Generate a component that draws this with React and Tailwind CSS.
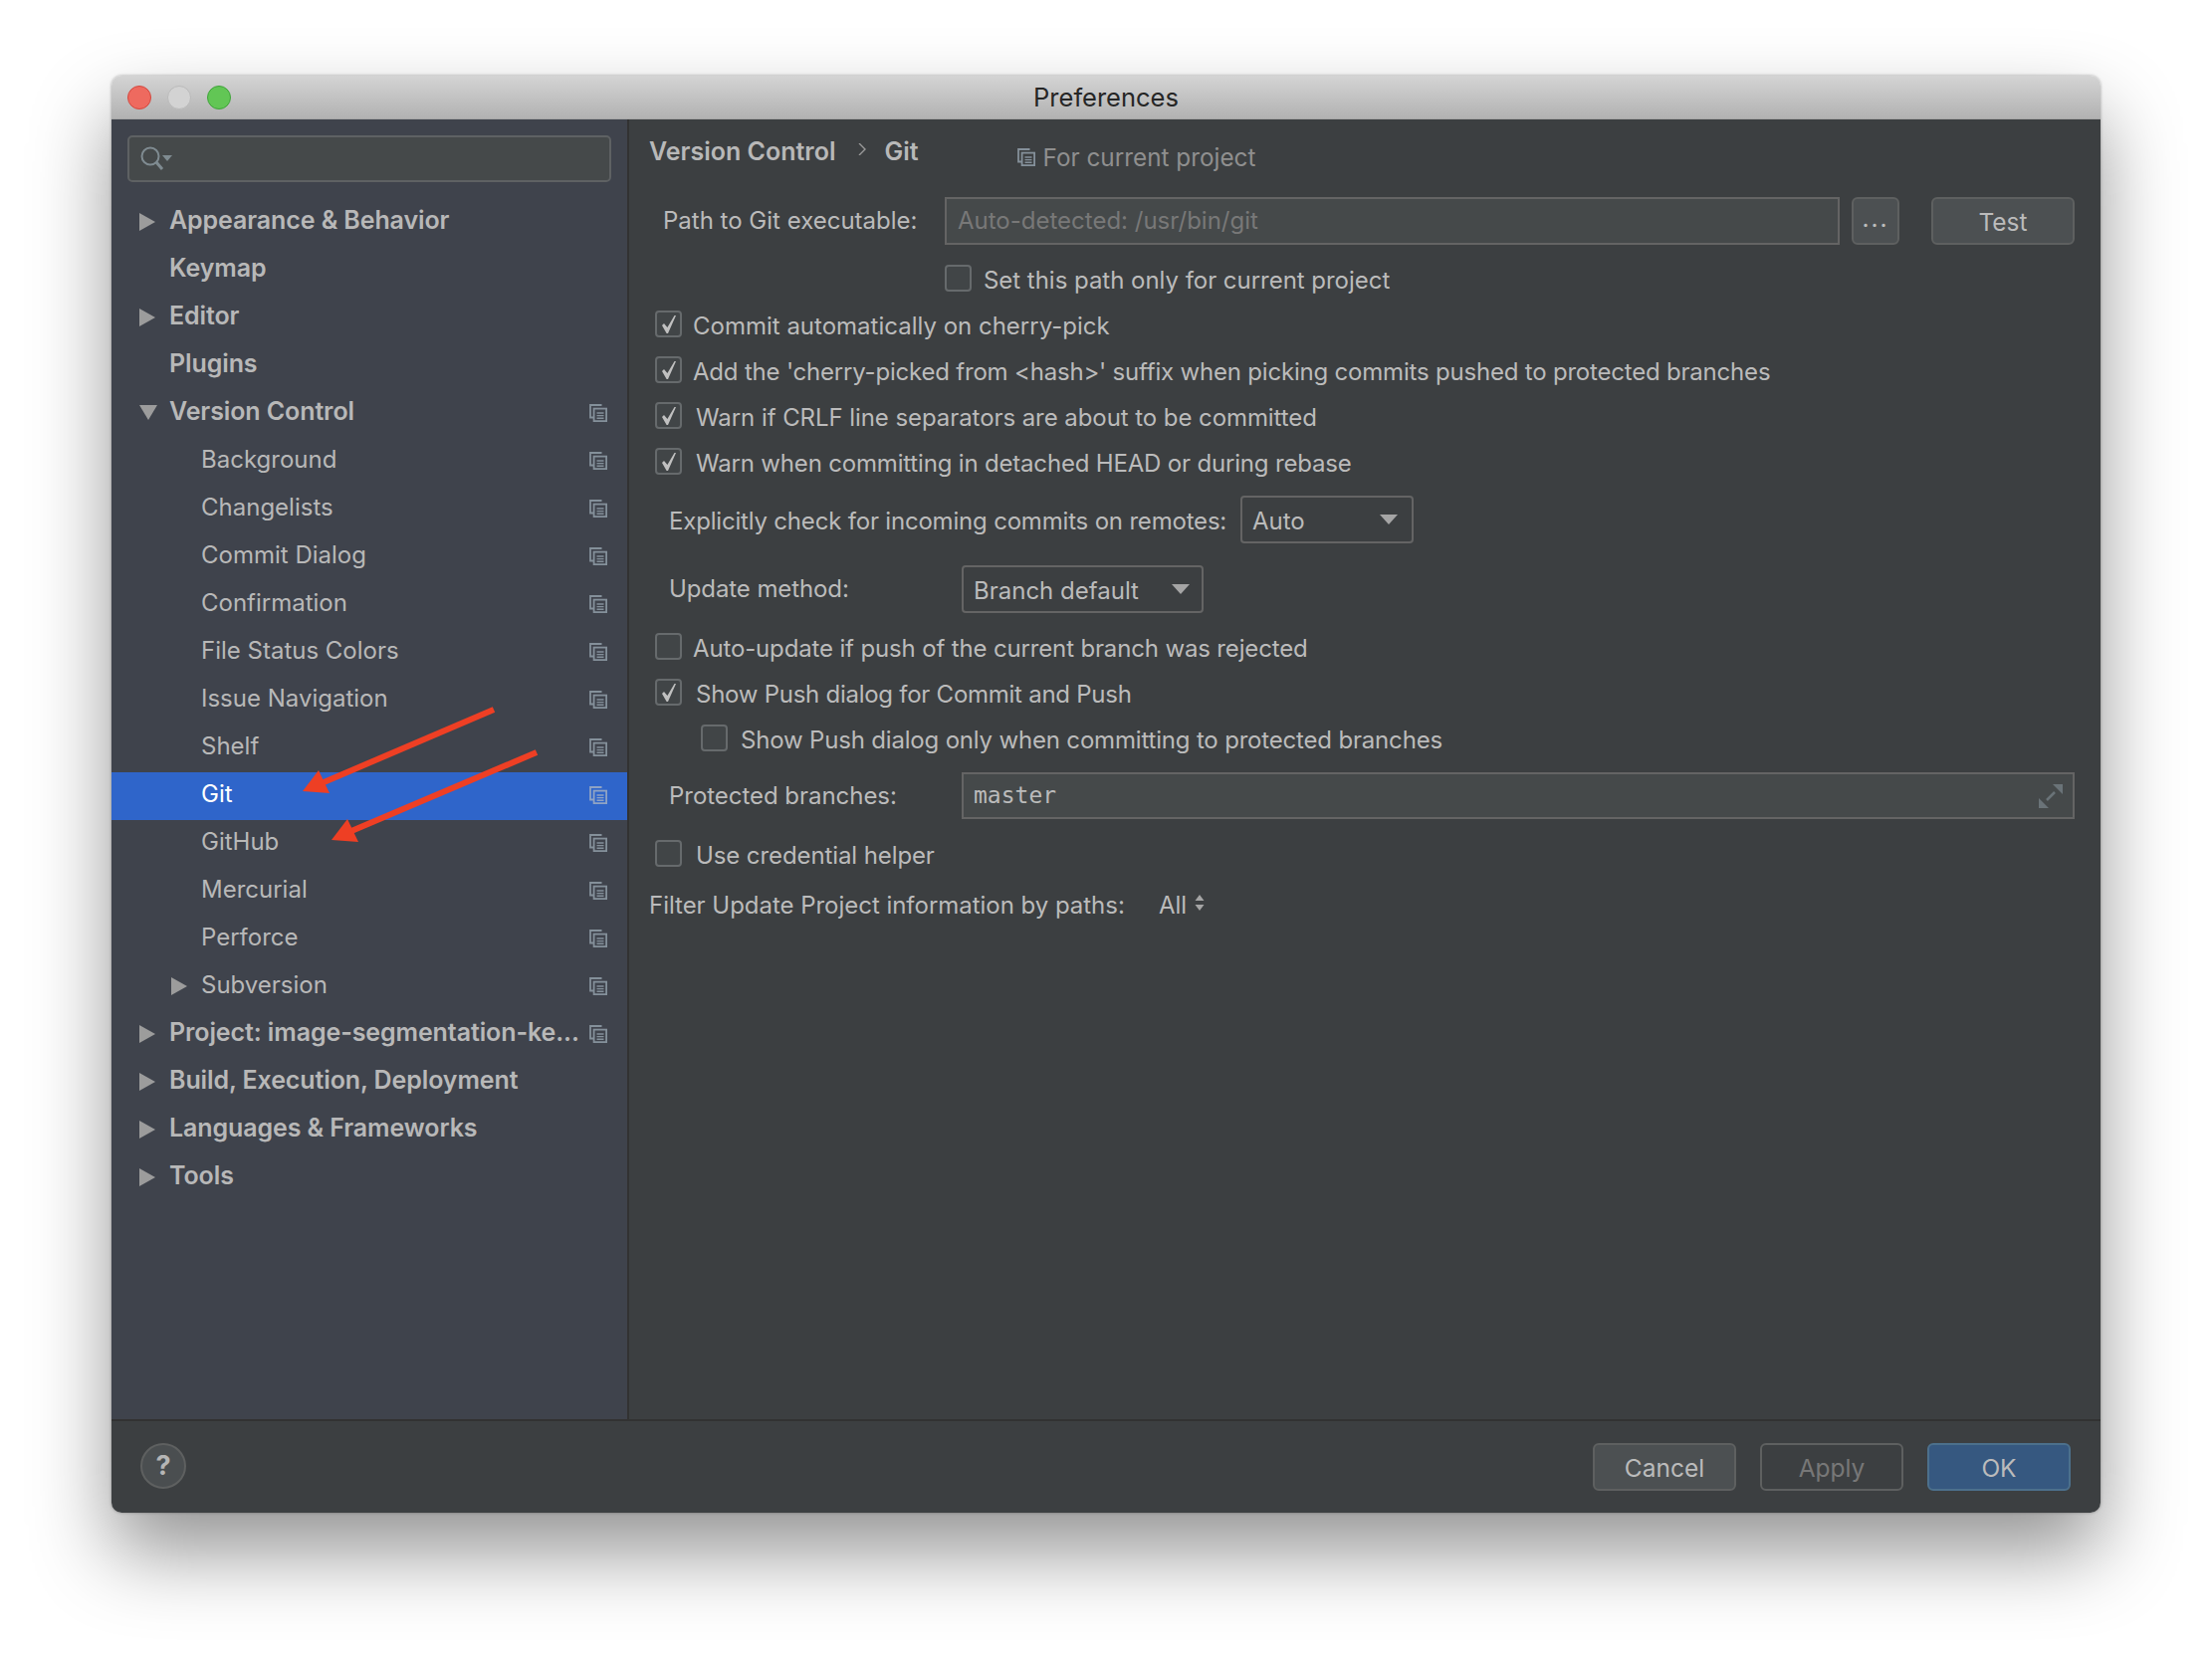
import React from 'react';

const treeItems = [
  { label: 'Appearance & Behavior', bold: true, arrow: 'right' },
  { label: 'Keymap', bold: true },
  { label: 'Editor', bold: true, arrow: 'right' },
  { label: 'Plugins', bold: true },
  { label: 'Version Control', bold: true, arrow: 'down', copy: true },
  { label: 'Background', level: 1, copy: true },
  { label: 'Changelists', level: 1, copy: true },
  { label: 'Commit Dialog', level: 1, copy: true },
  { label: 'Confirmation', level: 1, copy: true },
  { label: 'File Status Colors', level: 1, copy: true },
  { label: 'Issue Navigation', level: 1, copy: true },
  { label: 'Shelf', level: 1, copy: true },
  { label: 'Git', level: 1, copy: true, selected: true },
  { label: 'GitHub', level: 1, copy: true },
  { label: 'Mercurial', level: 1, copy: true },
  { label: 'Perforce', level: 1, copy: true },
  { label: 'Subversion', level: 1, arrow: 'right', copy: true },
  { label: 'Project: image-segmentation-ke...', bold: true, arrow: 'right', copy: true },
  { label: 'Build, Execution, Deployment', bold: true, arrow: 'right' },
  { label: 'Languages & Frameworks', bold: true, arrow: 'right' },
  { label: 'Tools', bold: true, arrow: 'right' },
];

function CopyIcon({ className = 'w-[18px] h-[18px] text-[#84909a]' }) {
  return (
    <svg viewBox="0 0 18 18" className={`shrink-0 ${className}`} fill="none" stroke="currentColor" strokeWidth="1.8">
      <path d="M12.5 1H1v12.5h3" />
      <rect x="4.6" y="4.6" width="12.5" height="12.5" />
      <path d="M7.5 9h7M7.5 11.6h7M7.5 14.2h7" strokeWidth="1.4" />
    </svg>
  );
}

function TreeRow({ item }) {
  const indent = item.level ? 'pl-[60px]' : 'pl-[28px]';
  return (
    <div className={`flex items-center h-12 pr-[20px] ${indent} ${item.selected ? 'bg-[#2f65ca]' : ''}`}>
      <div className="w-[30px] shrink-0 mb-[3px]">
        {item.arrow === 'right' && (
          <svg viewBox="0 0 16 18" className="w-4 h-[18px] text-[#9c9c9c]" fill="currentColor">
            <path d="M0 0l16 9L0 18z" />
          </svg>
        )}
        {item.arrow === 'down' && (
          <svg viewBox="0 0 18 15" className="w-[18px] h-[15px] text-[#9c9c9c]" fill="currentColor">
            <path d="M0 0h18L9 15z" />
          </svg>
        )}
      </div>
      <span
        className={`flex-1 whitespace-nowrap pb-[4px] ${
          item.bold ? 'text-[25px] tracking-[-0.1px] font-semibold' : 'text-[24px]'
        } ${item.selected ? 'text-white' : 'text-[#b8b8b8]'}`}
      >
        {item.label}
      </span>
      {item.copy && <CopyIcon className={`w-[18px] h-[18px] mb-[3px] ${item.selected ? 'text-[#8fa3c4]' : 'text-[#84909a]'}`} />}
    </div>
  );
}

function Checkbox({ checked }) {
  return (
    <div className="w-[27px] h-[27px] shrink-0 rounded-[4px] border-2 border-[#666a6c] bg-[#414547] flex items-center justify-center">
      {checked && (
        <svg viewBox="0 0 18 20" className="w-[18px] h-[20px] text-[#c0c0c0]" fill="currentColor">
          <path d="M2 11l2-2 3.4 4L14.5 1H16L8 19H6.6z" />
        </svg>
      )}
    </div>
  );
}

function CheckRow({ checked, label, className = '', labelGap = 'ml-[11px]', tracking = 'tracking-[-0.1px]' }) {
  return (
    <div className={`flex items-center h-[27px] ${className}`}>
      <Checkbox checked={checked} />
      <span className={`${labelGap} ${tracking} pt-[4px] text-[24px] text-[#bbbbbb] whitespace-nowrap`}>{label}</span>
    </div>
  );
}

function Combo({ value, className }) {
  return (
    <div className={`flex items-center justify-between h-full pl-[10px] rounded-[4px] border-2 border-[#646464] bg-[#3c3f41] ${className}`}>
      <span className="pt-[4px] text-[24px] text-[#bbbbbb]">{value}</span>
      <svg viewBox="0 0 18 10" className="w-[18px] h-[10px] text-[#a5a5a5]" fill="currentColor">
        <path d="M0 0h18L9 10z" />
      </svg>
    </div>
  );
}

function Button({ children, className = 'bg-[#4c5052] border-[#5e6060] text-[#bbbbbb]', width = 'w-[144px] pt-[3px]' }) {
  return (
    <div className={`flex items-center justify-center h-12 ${width} rounded-[6px] border-2 text-[24.5px] ${className}`}>
      {children}
    </div>
  );
}

export default function App() {
  return (
    <div className="relative w-[2222px] h-[1668px] bg-white pt-[76px] pl-[112px] font-['Inter',sans-serif]">
      <div className="flex flex-col w-[1998px] h-[1444px] rounded-[10px] overflow-hidden shadow-[0_40px_80px_rgba(0,0,0,0.42),0_0_3px_rgba(0,0,0,0.35)]">
        {/* title bar */}
        <div className="grid grid-cols-3 items-center h-[44px] shrink-0 bg-gradient-to-b from-[#d4d4d4] to-[#b2b2b2] border-b border-[#a6a6a6]">
          <div className="flex gap-[16px] pl-[16px]">
            <div className="w-6 h-6 rounded-full bg-[#ee6a5f] border border-[#d2483f]" />
            <div className="w-6 h-6 rounded-full bg-[#d3d3d3] border border-[#bababa]" />
            <div className="w-6 h-6 rounded-full bg-[#62c655] border border-[#3fa33a]" />
          </div>
          <div className="pt-[2px] text-center text-[25.5px] text-[#262626]">Preferences</div>
        </div>

        <div className="flex flex-1 min-h-0">
          {/* sidebar */}
          <div className="w-[520px] shrink-0 bg-[#3f434c] border-r-2 border-[#323232]">
            <div className="flex items-center h-[47px] mx-[16px] mt-[16px] mb-[17px] pl-[11px] rounded-[5px] border-2 border-[#5e6163] bg-[#45494a]">
              <svg viewBox="0 0 32 26" className="w-8 h-[26px] text-[#7f8b91]" fill="none" stroke="currentColor" strokeWidth="2">
                <circle cx="10" cy="10" r="8.5" />
                <path d="M16 16l6 7" strokeWidth="3" />
                <path d="M22 9h10l-5 6z" fill="currentColor" stroke="none" />
              </svg>
            </div>
            {treeItems.map((item) => (
              <TreeRow key={item.label} item={item} />
            ))}
          </div>

          {/* settings panel */}
          <div className="flex-1 min-w-0 bg-[#3c3f41] pr-[26px]">
            <div className="flex items-start h-[78px] pl-[20px] pt-[14px] text-[25px]">
              <span className="font-semibold text-[#b8b8b8] whitespace-nowrap">Version Control</span>
              <svg viewBox="0 0 8 12" className="w-2 h-3 ml-[23px] mt-[10px] text-[#9a9a9a]" fill="none" stroke="currentColor" strokeWidth="1.4">
                <path d="M1 0l6 6-6 6" />
              </svg>
              <span className="ml-[18px] font-semibold text-[#b8b8b8]">Git</span>
              <div className="flex items-center ml-[99px] mt-[6px] text-[24.3px] text-[#8f8f8f] whitespace-nowrap">
                <CopyIcon className="w-[18px] h-[18px] text-[#84909a]" />
                <span className="ml-[8px]">For current project</span>
              </div>
            </div>

            <div className="flex items-center h-12 pl-[34px]">
              <span className="w-[283px] shrink-0 text-[24px] text-[#bbbbbb] whitespace-nowrap">Path to Git executable:</span>
              <div className="flex items-center flex-1 h-full pl-[11px] border-2 border-[#646464] bg-[#45494a] text-[24px] text-[#787878]">
                Auto-detected: /usr/bin/git
              </div>
              <Button width="w-[48px] ml-[12px] items-end pb-[6px] tracking-[2px]">...</Button>
              <Button width="w-[144px] ml-[32px] pt-[3px]">Test</Button>
            </div>

            <CheckRow className="mt-[20px] ml-[317px]" labelGap="ml-[12px]" tracking="tracking-[-0.03px]" label="Set this path only for current project" />
            <CheckRow checked className="mt-[19px] ml-[26px]" tracking="tracking-[0px]" label="Commit automatically on cherry-pick" />
            <CheckRow checked className="mt-[19px] ml-[26px]" tracking="tracking-[-0.2px]" label="Add the 'cherry-picked from <hash>' suffix when picking commits pushed to protected branches" />
            <CheckRow checked className="mt-[19px] ml-[26px]" labelGap="ml-[14px]" tracking="tracking-[-0.07px]" label="Warn if CRLF line separators are about to be committed" />
            <CheckRow checked className="mt-[19px] ml-[26px]" labelGap="ml-[14px]" tracking="tracking-[-0.18px]" label="Warn when committing in detached HEAD or during rebase" />

            <div className="flex items-center h-12 mt-[21px] pl-[40px]">
              <span className="w-[574px] shrink-0 pt-[4px] text-[24px] tracking-[-0.19px] text-[#bbbbbb] whitespace-nowrap">Explicitly check for incoming commits on remotes:</span>
              <Combo value="Auto" className="w-[174px] pr-[14px]" />
            </div>

            <div className="flex items-center h-12 mt-[22px] pl-[40px]">
              <span className="w-[294px] shrink-0 text-[24px] tracking-[-0.1px] text-[#bbbbbb]">Update method:</span>
              <Combo value="Branch default" className="w-[243px] pr-[12px]" />
            </div>

            <CheckRow className="mt-[20px] ml-[26px]" tracking="tracking-[-0.15px]" label="Auto-update if push of the current branch was rejected" />
            <CheckRow checked className="mt-[19px] ml-[26px]" labelGap="ml-[14px]" tracking="tracking-[-0.26px]" label="Show Push dialog for Commit and Push" />
            <CheckRow className="mt-[19px] ml-[72px]" labelGap="ml-[13px]" tracking="tracking-[-0.18px]" label="Show Push dialog only when committing to protected branches" />

            <div className="flex items-center h-[47px] mt-[21px] pl-[40px]">
              <span className="w-[294px] shrink-0 text-[24px] tracking-[-0.04px] text-[#bbbbbb]">Protected branches:</span>
              <div className="flex items-center justify-between flex-1 h-full pl-[10px] pr-[10px] border-2 border-[#646464] bg-[#45494a]">
                <span className="font-['DejaVu_Sans_Mono',monospace] text-[23px] text-[#bbbbbb]">master</span>
                <svg viewBox="0 0 24 24" className="w-6 h-6 text-[#6a7378]" fill="currentColor">
                  <path d="M14 0h10v10zM0 14l10 10H0z" />
                  <path d="M8 16l8-8" stroke="currentColor" strokeWidth="2.5" />
                </svg>
              </div>
            </div>

            <CheckRow className="mt-[21px] ml-[26px]" labelGap="ml-[14px]" label="Use credential helper" />

            <div className="flex items-center h-8 mt-[22px] pl-[20px] pt-[2px] text-[24px] tracking-[-0.03px] text-[#bbbbbb]">
              <span className="w-[512px] shrink-0 whitespace-nowrap">Filter Update Project information by paths:</span>
              <span>All</span>
              <svg viewBox="0 0 10 16" className="w-[10px] h-4 ml-[8px] mb-[6px] text-[#a5a5a5]" fill="currentColor">
                <path d="M5 0l4.5 6h-9zM5 16L.5 10h9z" />
              </svg>
            </div>
          </div>
        </div>

        {/* footer */}
        <div className="flex items-start justify-between h-[94px] shrink-0 pt-[22px] pl-[29px] pr-[30px] bg-[#3c3f41] border-t-2 border-[#323232]">
          <div className="flex items-center justify-center w-[46px] h-[46px] rounded-full border-2 border-[#5e6060] bg-[#4a4e50] text-[27px] font-bold text-[#b5b5b5]">
            ?
          </div>
          <div className="flex gap-[24px]">
            <Button>Cancel</Button>
            <Button className="bg-[#3c3f41] border-[#5e6060] text-[#777777]">Apply</Button>
            <Button className="bg-[#365880] border-[#4c708c] text-[#bbbbbb]">OK</Button>
          </div>
        </div>
      </div>

      {/* red annotation arrows */}
      <svg viewBox="0 0 2222 1668" className="absolute inset-0 w-[2222px] h-[1668px] pointer-events-none">
        <path d="M496 713L316 790" stroke="#ee3f24" strokeWidth="6" />
        <path d="M304 795L320 774L331 797z" fill="#ee3f24" />
        <path d="M539 756L346 838" stroke="#ee3f24" strokeWidth="6" />
        <path d="M333 844L349 823L360 846z" fill="#ee3f24" />
      </svg>
    </div>
  );
}
